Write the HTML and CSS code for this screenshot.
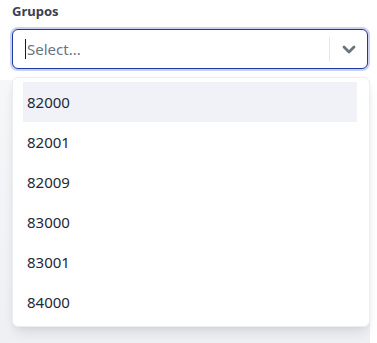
FILE: index.html
```html
<!DOCTYPE html>
<html lang="es">
<head>
    <meta charset="UTF-8">
    <meta name="viewport" content="width=device-width, initial-scale=1.0">
    <title>Grupos</title>
    <link rel="stylesheet" href="styles.css">
</head>
<body>
    <div class="field">
        <label class="field-label">Grupos</label>
        <div class="select">
            <div class="select-value"><span class="caret"></span>Select...</div>
            <div class="select-indicators">
                <span class="separator"></span>
                <svg class="chevron" width="20" height="20" viewBox="0 0 20 20"><path d="M5 8 L10 13 L15 8" fill="none" stroke="currentColor" stroke-width="2.8" stroke-linecap="round" stroke-linejoin="round"/></svg>
            </div>
        </div>
        <div class="backdrop"></div>
        <ul class="menu">
            <li class="option active">82000</li>
            <li class="option">82001</li>
            <li class="option">82009</li>
            <li class="option">83000</li>
            <li class="option">83001</li>
            <li class="option">84000</li>
        </ul>
    </div>
</body>
</html>
```
FILE: styles.css
```css
body {
    margin: 0;
    background: #fff;
    font-family: "Noto Sans", sans-serif;
    overflow: hidden;
}
.field {
    position: relative;
    padding: 2px 9px 0 12px;
    height: 341px;
}
.field-label {
    display: block;
    font-size: 13px;
    font-weight: 700;
    color: #374151;
    line-height: 18px;
    margin-bottom: 9px;
}
.select {
    display: flex;
    align-items: center;
    height: 38px;
    border: 1px solid #1e3a9f;
    border-radius: 6px;
    box-shadow: 0 0 0 2px #c9d0f0;
    background: #fff;
}
.select-value {
    flex: 1;
    display: flex;
    align-items: center;
    padding-left: 12px;
    font-size: 15px;
    color: #6b7280;
}
.caret {
    width: 1px;
    height: 20px;
    background: #111827;
    margin-right: 1px;
}
.select-indicators {
    display: flex;
    align-items: center;
    height: 100%;
}
.separator {
    width: 1px;
    height: 24px;
    background: #e5e7eb;
}
.chevron {
    color: #6b7280;
    margin: 0 8px 0 9px;
}
.backdrop {
    position: absolute;
    left: 0;
    top: 80px;
    width: 370px;
    bottom: 0;
    background: linear-gradient(#f6f7f9, #eff0f3);
}
.menu {
    position: absolute;
    left: 12px;
    top: 77px;
    width: 334px;
    margin: 0;
    padding: 4px 12px 4px 10px;
    list-style: none;
    background: #fff;
    border: 1px solid #eceef2;
    border-radius: 6px;
    box-shadow: 0 8px 14px -4px rgba(17, 24, 39, 0.12), 0 2px 4px rgba(17, 24, 39, 0.04);
}
.option {
    height: 40px;
    line-height: 40px;
    padding-left: 4px;
    font-size: 15px;
    color: #1f2937;
}
.option.active {
    background: #f0f2f7;
}
```
